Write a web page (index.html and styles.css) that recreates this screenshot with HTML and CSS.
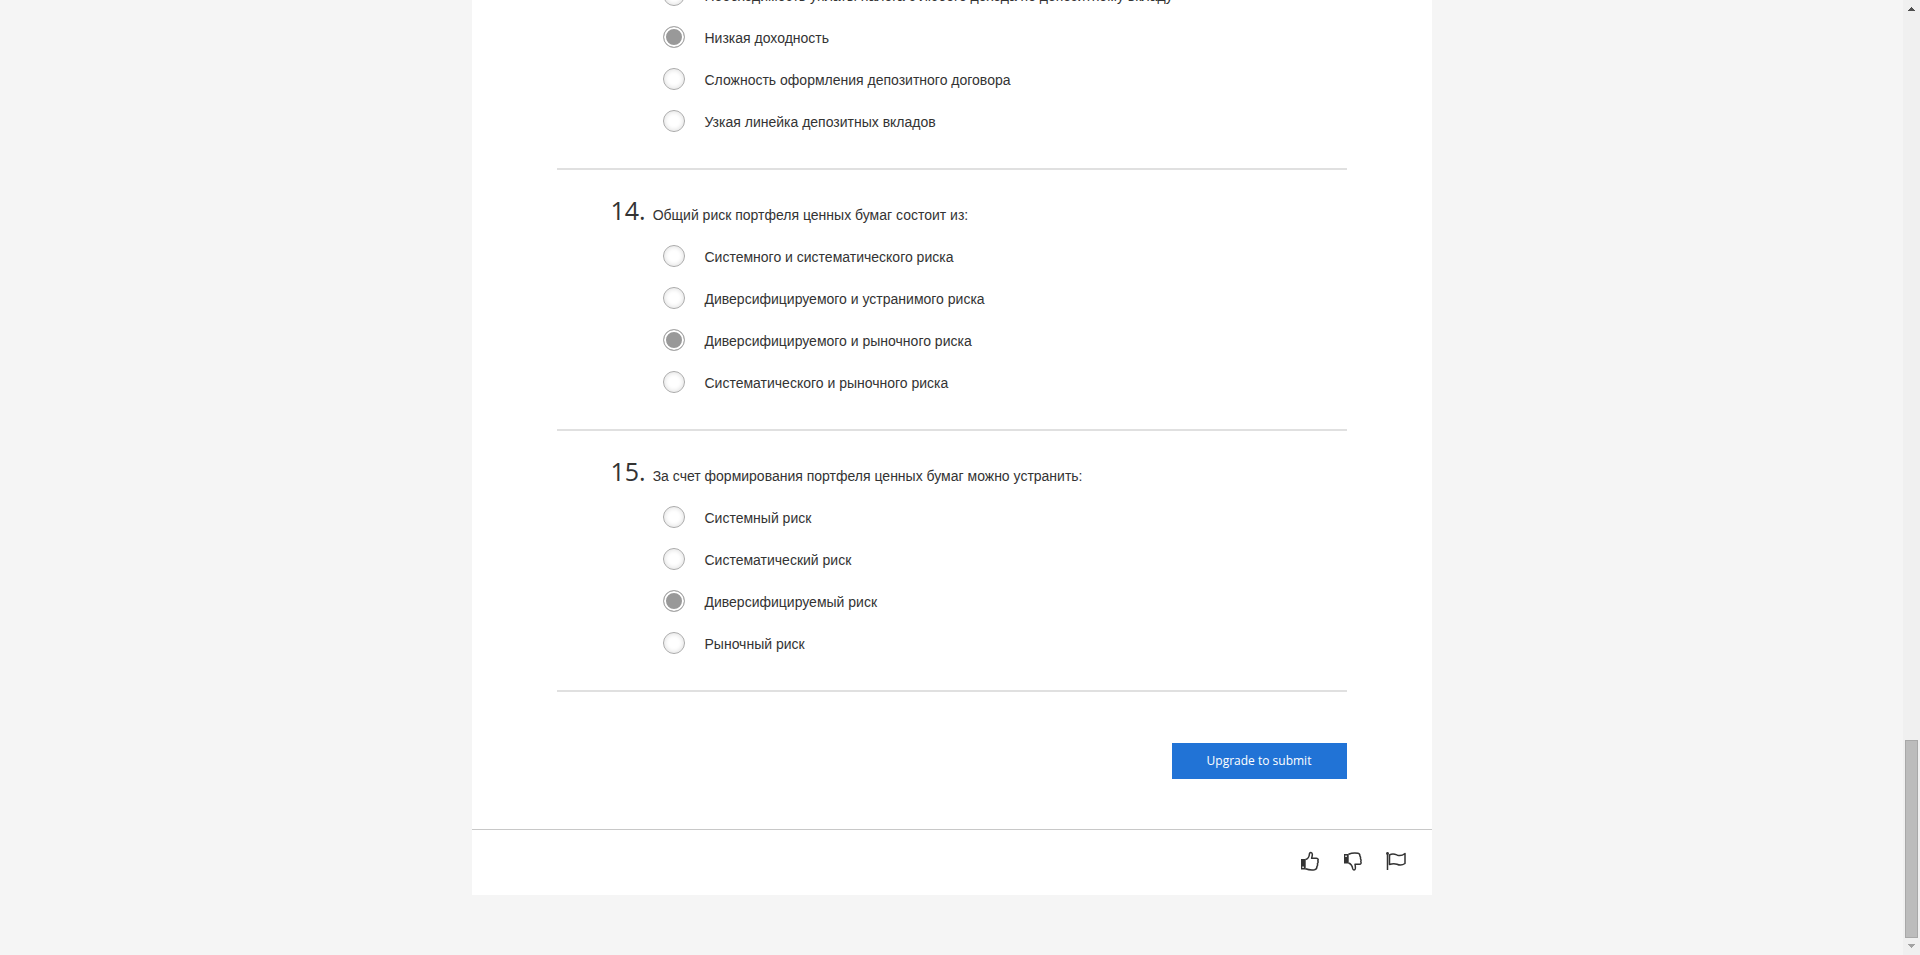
FILE: index.html
```html
<!DOCTYPE html>
<html lang="ru">
<head>
<meta charset="utf-8">
<title>Quiz</title>
<link rel="stylesheet" href="styles.css">
</head>
<body>
<div class="viewport">
  <main class="scroller">
    <div class="card">
      <form class="quiz">
        <fieldset class="question">
          <label class="option"><input class="radio" type="radio" name="q13"><span>Необходимость уплаты налога с любого дохода по депозитному вкладу</span></label>
          <label class="option"><input class="radio" type="radio" name="q13" checked><span>Низкая доходность</span></label>
          <label class="option"><input class="radio" type="radio" name="q13"><span>Сложность оформления депозитного договора</span></label>
          <label class="option"><input class="radio" type="radio" name="q13"><span>Узкая линейка депозитных вкладов</span></label>
        </fieldset>
        <fieldset class="question" aria-labelledby="t14">
          <div class="title" id="t14"><span class="number">14.</span><span class="prompt">Общий риск портфеля ценных бумаг состоит из:</span></div>
          <label class="option"><input class="radio" type="radio" name="q14"><span>Системного и систематического риска</span></label>
          <label class="option"><input class="radio" type="radio" name="q14"><span>Диверсифицируемого и устранимого риска</span></label>
          <label class="option"><input class="radio" type="radio" name="q14" checked><span>Диверсифицируемого и рыночного риска</span></label>
          <label class="option"><input class="radio" type="radio" name="q14"><span>Систематического и рыночного риска</span></label>
        </fieldset>
        <fieldset class="question" aria-labelledby="t15">
          <div class="title" id="t15"><span class="number">15.</span><span class="prompt">За счет формирования портфеля ценных бумаг можно устранить:</span></div>
          <label class="option"><input class="radio" type="radio" name="q15"><span>Системный риск</span></label>
          <label class="option"><input class="radio" type="radio" name="q15"><span>Систематический риск</span></label>
          <label class="option"><input class="radio" type="radio" name="q15" checked><span>Диверсифицируемый риск</span></label>
          <label class="option"><input class="radio" type="radio" name="q15"><span>Рыночный риск</span></label>
        </fieldset>
        <div class="actions"><button class="submit" type="button">Upgrade to submit</button></div>
      </form>
      <footer class="feedback">
        <button class="icon-button" type="button" aria-label="Like">
          <svg class="icon" viewBox="0 0 20 20"><path class="line" d="M5.500 8.500C8 8 9.300 5.500 9.500 2.500C9.800 1 12 1 12.300 3C12.500 4.500 12 6 11.600 7.200H16.500C18.300 7.200 18.500 9 17.800 9.800C18.300 10.800 18.100 12 17.400 12.700C17.800 13.800 17.500 14.800 16.900 15.500C17 17.800 16 18.500 14.500 18.800C11 19.300 8 18.700 5.500 17.800"/><path class="solid" fill-rule="evenodd" d="M1 8H5.700V18.500H1ZM2.300 15.500V17H3.800V15.500Z"/></svg>
        </button>
        <button class="icon-button" type="button" aria-label="Dislike">
          <svg class="icon" viewBox="0 0 20 20"><path class="line" d="M5.500 3.300C8.500 2 12 1.700 15 2.300C16.500 2.600 17 3.500 16.900 5C17.600 5.800 17.800 6.600 17.500 7.800C18.200 8.700 18.300 9.700 17.800 10.700C18.500 12 18 13.300 16.500 13.300H12C12.300 15 12.700 16.300 12.300 17.800C11.800 19.500 10 19.300 9.700 17.700C9.300 15 8 12.800 5.500 12"/><path class="solid" fill-rule="evenodd" d="M1 3H5.700V12.500H1ZM2.300 4.500V6H3.800V4.500Z"/></svg>
        </button>
        <button class="icon-button" type="button" aria-label="Flag">
          <svg class="icon" viewBox="0 0 20 20"><path class="line" d="M1.500 2V19M3.500 4C7 2 9 3.200 11.500 4.200C14 5 16.500 4.500 19 2.500V12.500C16 14.500 13.500 14.300 11 13.200C8.500 12.300 6 12.500 3.500 13.500Z"/><circle class="solid" cx="1.500" cy="2.500" r="1.400"/></svg>
        </button>
      </footer>
    </div>
  </main>
  <div class="scrollbar" aria-hidden="true">
    <svg class="arrow arrow-up" viewBox="0 0 17 17"><path d="M8 7h1v1h1v1h1v1h1v1H5v-1h1V9h1V8h1z"/></svg>
    <div class="track"><div class="thumb"></div></div>
    <svg class="arrow arrow-down" viewBox="0 0 17 17"><path d="M5 6h7v1h-1v1h-1v1H9v1H8V9H7V8H6V7H5z"/></svg>
  </div>
</div>
</body>
</html>
```
FILE: styles.css
```css
* { box-sizing: border-box; }

body {
  margin: 0;
  background: #f5f5f5;
  color: #333;
  font: 14px/20px "Liberation Sans", Arial, sans-serif;
}

.viewport {
  display: flex;
  height: 100vh;
  overflow: hidden;
}

/* The quiz is scrolled to its end, so content is anchored to the bottom. */
.scroller {
  flex: 1;
  display: flex;
  flex-direction: column;
  justify-content: flex-end;
  align-items: center;
  padding-bottom: 60px;
}

.card {
  width: 100%;
  max-width: 960px;
  flex-shrink: 0;
  background: #fff;
}

.quiz { padding: 0 85px; }

.question {
  margin: 0;
  padding: 23px 0 26px;
  border: 0;
  border-bottom: 2px solid #e0e0e0;
}

.title {
  display: flex;
  align-items: baseline;
  gap: 7px;
  height: 42px;
  padding-left: 54px;
  line-height: 35px;
}

.number { font-family: "Open Sans", sans-serif; font-size: 25px; }

.option {
  display: flex;
  align-items: center;
  gap: 20px;
  height: 42px;
  padding-left: 106px;
}

.option span { padding-top: 2px; }

.radio {
  appearance: none;
  width: 22px;
  height: 22px;
  margin: 0;
  border: 1px solid #aaa;
  border-radius: 50%;
  background: #fff;
  box-shadow: inset 0 0 4px 1px #e4e4e4;
}

.radio:checked {
  background: #999;
  box-shadow: inset 0 0 0 2px #fff;
}

.actions {
  display: flex;
  justify-content: flex-end;
  padding: 51px 0 50px;
}

.submit {
  min-width: 175px;
  height: 36px;
  padding: 0 32px;
  border: 0;
  background: #2173d6;
  color: #fff;
  font: 500 12px/20px "Open Sans", sans-serif;
}

.feedback {
  display: flex;
  justify-content: flex-end;
  align-items: center;
  gap: 23px;
  height: 66px;
  padding: 0 26px 4px 0;
  border-top: 1px solid #c8c8c8;
}

.icon-button {
  padding: 0;
  border: 0;
  background: none;
}

.icon { display: block; width: 20px; height: 20px; }
.line { fill: none; stroke: #333; stroke-width: 1.5; stroke-linejoin: round; }
.solid { fill: #333; }

.scrollbar {
  display: flex;
  flex-direction: column;
  width: 17px;
  background: #f0f0f0;
}

.arrow { display: block; width: 17px; height: 17px; }
.arrow-up { fill: #505050; }
.arrow-down { fill: #a3a3a3; }

.track {
  flex: 1;
  display: flex;
  flex-direction: column;
  justify-content: flex-end;
  padding: 0 2px;
}

.thumb {
  height: 198px;
  border: 1px solid #a8a8a8;
  background: #bcbcbc;
}
```
